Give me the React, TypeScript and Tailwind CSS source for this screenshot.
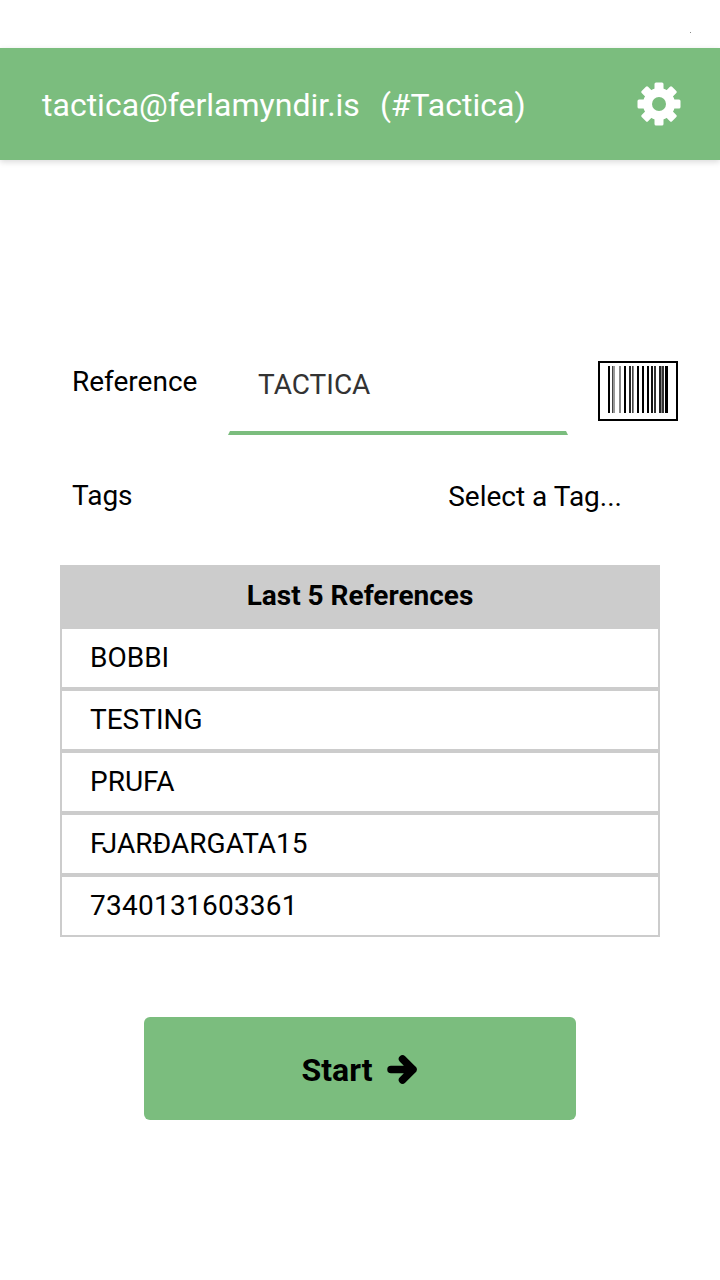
const rows = ["BOBBI", "TESTING", "PRUFA", "FJARÐARGATA15", "7340131603361"];
const bars: [number, number, string][] = [
  [0, 2, "#000"], [4, 1, "#444"], [5, 2, "#999"], [11, 2, "#888"], [16, 2, "#000"],
  [21, 2, "#222"], [24, 1, "#444"], [25, 1, "#888"], [29, 2, "#000"], [34, 2, "#000"],
  [39, 2, "#000"], [43, 2, "#111"], [46, 2, "#333"], [51, 2, "#222"], [53, 1, "#888"],
  [54, 2, "#333"], [57, 3, "#000"],
];
const teeth = [0, 45, 90, 135, 180, 225, 270, 315];

export default function App() {
  return (
    <div className="w-[720px] h-[1280px] bg-white overflow-hidden font-['Roboto',sans-serif] text-black">
      <div className="h-12 relative">
        <div className="absolute left-[690px] top-[32px] w-px h-px bg-[#888]" />
      </div>
      <header className="h-28 bg-[#7bbd7e] flex items-center justify-between pl-[42px] pr-[39px] shadow-[0_2px_6px_rgba(0,0,0,0.15)] text-white">
        <div className="text-[32px] flex gap-[20px] leading-none pt-[2px]">
          <span>tactica@ferlamyndir.is</span>
          <span>(#Tactica)</span>
        </div>
        <svg width="44" height="44" viewBox="0 0 44 44" className="block">
          {teeth.map((a) => (
            <rect key={a} x="17.5" y="0.5" width="9" height="10" rx="1.5" fill="#fff" transform={`rotate(${a} 22 22)`} />
          ))}
          <circle cx="22" cy="22" r="16" fill="#fff" />
          <circle cx="22" cy="22" r="7" fill="#7bbd7e" />
        </svg>
      </header>

      <div className="pl-[72px] pt-[200px] pr-[42px] flex items-start h-[275px]">
        <div className="w-[156px] text-[28px] leading-none mt-[8px]">Reference</div>
        <div className="w-[340px] h-[75px] border-b-4 border-x-2 border-x-transparent border-b-[#7bbd7e] pl-[28px] pt-[5px] text-[28px] text-[#333] leading-[40px]">
          TACTICA
        </div>
        <div className="ml-[30px] mt-[1px] w-20 h-[60px] border-2 border-black flex items-start justify-center pt-[3px]">
          <svg width="60" height="47" viewBox="0 0 60 47" className="block">
            {bars.map(([x, w, c]) => (
              <rect key={x} x={x} y={0} width={w} height={47} fill={c} />
            ))}
          </svg>
        </div>
      </div>

      <div className="pl-[72px] pr-[98px] flex justify-between items-center h-[60px] mt-[31px] text-[28px]">
        <span>Tags</span>
        <span className="pt-[1px]">Select a Tag...</span>
      </div>

      <div className="mx-[60px] mt-[39px] border-2 border-t-0 border-[#cccccc]">
        <div className="-mx-[2px] h-16 pb-[2px] bg-[#cccccc] flex items-center justify-center text-[28px] font-bold">
          Last 5 References
        </div>
        {rows.map((r, i) => (
          <div
            key={r}
            className={
              i < 4
                ? "h-[62px] pb-[1px] pl-[28px] flex items-center text-[28px] border-b-[4px] border-[#cccccc]"
                : "h-[58px] pb-[1px] pl-[28px] flex items-center text-[28px] tracking-[0.25px]"
            }
          >
            {r}
          </div>
        ))}
      </div>

      <div className="flex justify-center mt-[80px]">
        <button className="w-[432px] h-[103px] pt-[2px] bg-[#7bbd7e] rounded-[6px] flex items-center justify-center gap-[15px] text-[32px] font-bold">
          <span>Start</span>
          <svg width="31" height="31" viewBox="0 0 31 31" fill="none" stroke="#000" strokeWidth="7.5" strokeLinecap="round" strokeLinejoin="round" className="block">
            <path d="M4 15.5H26M15.5 5L26 15.5L15.5 26" />
          </svg>
        </button>
      </div>
    </div>
  );
}
